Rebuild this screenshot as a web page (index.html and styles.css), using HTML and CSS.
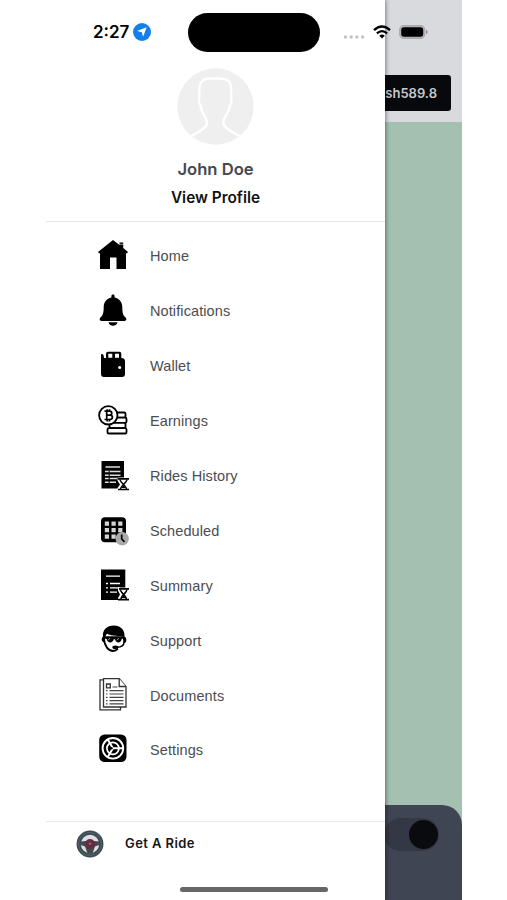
FILE: index.html
```html
<!DOCTYPE html>
<html lang="en">
<head>
<meta charset="utf-8">
<title>Menu</title>
<link rel="stylesheet" href="styles.css">
</head>
<body>
<div class="phone">
  <div class="backdrop">
    <header class="top"><div class="balance">Ksh589.8</div></header>
    <div class="map"><div class="sheet"><div class="switch"><span class="knob"></span></div></div></div>
  </div>
  <aside class="drawer">
    <section class="profile">
      <svg class="avatar" viewBox="0 0 77 77">
        <defs><clipPath id="round"><circle cx="38.5" cy="38.5" r="38.2"/></clipPath></defs>
        <circle cx="38.5" cy="38.5" r="38.2" fill="#efefef"/>
        <path clip-path="url(#round)" d="M13 69C20 64 28 62 30 56C31 49 24 47 23.500 37C21 35 22 31 22.500 26C21 8 31 11 38 10.500C46 11 56 8 54 26C54.500 31 55.500 35 53 37C52 47 45 49 46.500 56C48.500 62 57 64 64 69" fill="none" stroke="#fff" stroke-width="2.4"/>
      </svg>
      <div class="name">John Doe</div>
      <div class="view">View Profile</div>
    </section>
    <nav class="menu">
      <a class="item"><svg class="icon" viewBox="0 0 32 32"><path d="M1 12 16 0l6.500 5V2.600h3.700v5.400L31 12l-1 1.300h-1V29h-9.500V17.500h-6.500V29H3V13.300H2z"/><path d="M22 4.300h4.400" stroke="#fff" stroke-width=".6"/></svg><span>Home</span></a>
      <a class="item"><svg class="icon" viewBox="0 0 32 32"><path d="M16-.5c1 0 1.600.7 1.600 1.700v1.200c5 1 7.700 4.800 7.700 9.600 0 6 .8 8.200 3 10.300 1.800 1.600 1 3.700-.8 3.700h-23c-1.800 0-2.600-2.100-.8-3.700 2.200-2.100 3-4.300 3-10.300 0-4.800 2.700-8.600 7.700-9.600V1.200C14.400.2 15-.5 16-.5zM11.500 27.300h9c-.3 2.100-2.300 3.500-4.500 3.500s-4.200-1.400-4.500-3.500z"/></svg><span>Notifications</span></a>
      <a class="item"><svg class="icon" viewBox="0 0 32 32"><path d="M4 4.500Q5.500 3.500 6.500 5L7 8h2V3.700Q9 1.700 11 1.700h11.300q2 0 2 2V8Q28 8 28 11v13q0 3-3 3H7q-3 0-3-3z"/><path d="M11.300 3.800h4v4h-4zM18 3.800h4v4h-4z" fill="#fff"/><circle cx="22.700" cy="17.500" r="1.500" fill="#fff"/></svg><span>Wallet</span></a>
      <a class="item"><svg class="icon" viewBox="0 0 32 32"><g fill="#fff" stroke="#000" stroke-width="1.800"><rect x="14.500" y="7.500" width="14" height="5.200" rx="1.300"/><rect x="15.500" y="12.700" width="14" height="5.200" rx="1.300"/><rect x="12.500" y="17.900" width="16" height="5.200" rx="1.300"/><rect x="10.500" y="23.100" width="19" height="5.400" rx="1.300"/><circle cx="11.300" cy="10.300" r="9.200"/></g><path d="M7.500 6.200h5c3 0 3 4 0 4H9.500h3.300c3.500 0 3.500 4.300 0 4.300H7.500M9.700 6v8.500M10.200 4.300v2m2.300-2v2M10.200 14.500v2m2.300-2v2" fill="none" stroke="#000" stroke-width="1.700"/></svg><span>Earnings</span></a>
      <a class="item"><svg class="icon" viewBox="0 0 32 32"><path d="M4.500 1H27v27.500H4.500z"/><path d="M8.500 7h14.500M8 11.500h15.500M8 15.200h15.500M8 18.600h12M8 22.200h11" stroke="#ddd" stroke-width="1.500"/><path d="M12.200 11v12" stroke="#000"/><path d="m20.500 17.500h11.500v3l-2.500 4 2.500 3.500v3H20.500v-3l2.500-3.500-2.500-4z" fill="#fff"/><path d="M21 18.800h11M21 29.500h11" stroke="#000" stroke-width="1.700"/><path d="M23 19.500c0 3 6.500 6 6.500 9.500M30 19.500c0 3-6.500 6-6.500 9.500" fill="none" stroke="#000" stroke-width="1.400"/><path d="m26.500 25 2 3h-4z"/></svg><span>Rides History</span></a>
      <a class="item"><svg class="icon" viewBox="0 0 32 32"><rect x="4" y="2.300" width="25" height="25" rx="4"/><path d="M7.800 6.500h4.200v4.200H7.800zm6.700 0h4.200v4.200h-4.200zm6.700 0h4.200v4.200h-4.200zM7.800 13h4.200v4.200H7.800zm6.700 0h4.200v4.200h-4.200zm6.700 0h4.200v4.200h-4.200zM7.800 19.500h4.200v4.200H7.800zm6.700 0h4.200v4.200h-4.200z" fill="#d5d5d5"/><circle cx="25.200" cy="23.700" r="6.700" fill="#aaa"/><path d="M24.700 19.500v4.500l2.800 2.800" fill="none" stroke="#000" stroke-width="1.700"/></svg><span>Scheduled</span></a>
      <a class="item"><svg class="icon" viewBox="0 0 32 32"><path d="M4-.5h24.300V30H4z"/><path d="M9 6.200h14M9 13.500h2m2 0h10M9 17.800h2m2 0h10M9 22.200h2m2 0h7" stroke="#fff" stroke-width="1.300"/><path d="M21 17.500h11v3l-2.500 4 2.500 3.500v3H21v-3l2-3.500-2-4z" fill="#fff"/><path d="M22 18.800h10M21 29.700h11" stroke="#000" stroke-width="1.700"/><path d="M23.300 19.500c0 3 6 6 6 9.500M30 19.500c0 3-6 6-6 9.500" fill="none" stroke="#000" stroke-width="1.500"/><path d="m26.600 25 2 3h-4z"/></svg><span>Summary</span></a>
      <a class="item"><svg class="icon" viewBox="0 0 32 32"><path d="M6 11.500C5.300 4.500 10 .4 16.700.4S28 4.500 27.500 11.500q1.800 1 1.800 3v1.500q0 2-2.800 2.300L25.500 11C20 11 12 10.500 10 8.500L8 12v5.500q-3.300-.5-3.300-3Q4.700 12.500 6 11.500z"/><path d="M7 14c.4 7 4.500 12 9 12 2 0 3.500-.7 5-2.300" fill="none" stroke="#000" stroke-width="1.900"/><path d="M7.500 11.300h18.500v2.200l-1.300.5c-.3 4.500-6.200 4.500-6.700.3h-1.300c-.5 4.200-6.500 4.200-7-.3l-2.200-.5z"/><path d="m11.200 15.200 1.700-2M20 15.200l1.700-2" stroke="#ccc" stroke-width=".8"/><path d="M27 17c0 3.500-3 5.200-7 5.200" fill="none" stroke="#000" stroke-width="1.500"/><ellipse cx="18.300" cy="22.300" rx="3" ry="1.900"/></svg><span>Support</span></a>
      <a class="item"><svg class="icon" viewBox="0 0 32 32"><g fill="#fff" stroke="#333" stroke-width="1.300"><path d="M6.500-.2H3v30h20.500V27"/><path d="M6.500-1.300h15.700L29 6.500v20.500H6.500z"/><path d="M22.200-1.300v7.800H29M9.500 4h3.800v3.800H9.500z"/></g><path d="M15.500 7h5M9 10.700h1.500m2 0h14M9 14h1.500m2 0h14M9 17.300h1.500m2 0h14M9 20.600h1.500m2 0h14M9 23.900h1.500m2 0h14" stroke="#444" stroke-width="1.200"/></svg><span>Documents</span></a>
      <a class="item"><svg class="icon" viewBox="0 0 32 32"><rect x="2.200" y=".5" width="27.300" height="27.500" rx="5.500"/><g fill="none" stroke="#fff"><circle cx="15.900" cy="14.300" r="10.300" stroke-width="1.900"/><circle cx="15.900" cy="14.300" r="6" stroke-width="1.700"/><path d="M16 14.300h10M15.900 14.300 10.800 5.500M15.900 14.300l-5.100 8.800" stroke-width="2"/></g><circle cx="14.500" cy="14.300" r="1.200"/></svg><span>Settings</span></a>
    </nav>
    <footer class="ride">
      <svg class="wheel" viewBox="0 0 28 28"><circle cx="14" cy="14" r="11.300" fill="#dedfe0" stroke="#3c4b52" stroke-width="4.300"/><circle cx="14" cy="14" r="11.500" fill="none" stroke="#66757b" stroke-width=".6"/><path d="M5 11.500 10 11h8l5 .5v3.500l-4 1.500-2.500 7h-5L9 16.500 5 15z" fill="#46474f"/><circle cx="14" cy="14" r="5" fill="#622e43"/><circle cx="14" cy="13.700" r="1.300" fill="#956177"/></svg>
      <span>Get A Ride</span>
    </footer>
  </aside>
  <div class="status">
    <span class="time">2:27</span>
    <svg class="locate" viewBox="0 0 18 18"><circle cx="9" cy="9" r="9" fill="#137eed"/><path d="m13.700 4.300-3.600 9.500-1.300-4.600-4.700-1.300z" fill="#fff"/></svg>
    <span class="island"></span>
    <svg class="signal" viewBox="0 0 22 6" fill="#c3c3c6"><circle cx="2.500" cy="3" r="1.700"/><circle cx="8.200" cy="3" r="1.700"/><circle cx="13.900" cy="3" r="1.700"/><circle cx="19.600" cy="3" r="1.700"/></svg>
    <svg class="wifi" viewBox="0 0 18 14"><path d="M1 5.200Q9-2.200 17 5.200M3.900 8.400q5.100-4.600 10.200 0" fill="none" stroke="#000" stroke-width="2.300"/><path d="M6.200 10.700q2.800-2.300 5.600 0L9 13.500z"/></svg>
    <svg class="battery" viewBox="0 0 29 14"><rect x=".7" y=".7" width="25" height="12.600" rx="4" fill="#b5b5b8" stroke="#aaaaad" stroke-width="1.200"/><rect x="2.200" y="2.200" width="22" height="9.600" rx="2.700"/><path d="M27 4.700q1.600.8 1.600 2.300T27 9.300z" fill="#88888c"/></svg>
  </div>
  <span class="home-bar"></span>
</div>
</body>
</html>
```

FILE: styles.css
```css
* { box-sizing: border-box; }
body { margin: 0; background: #fff; font-family: Inter, "Liberation Sans", sans-serif; }
svg { display: block; flex: none; overflow: visible; }
.phone { position: relative; width: 416px; height: 900px; margin-left: 46px; overflow: hidden; }

.backdrop { display: flex; flex-direction: column; height: 900px; }
.top { height: 122px; padding: 75px 11px 0 0; background: #d9dade; display: flex; justify-content: flex-end; align-items: flex-start; }
.balance { height: 36px; padding: 0 14px; border-radius: 3px; background: #07090d; color: #c8c9cc; font-size: 13px; font-weight: 600; line-height: 36px; letter-spacing: 0; }
.map { flex: 1; display: flex; align-items: flex-end; background: #a3c0b1; }
.sheet { width: 100%; height: 95px; padding: 13px 23px; border-radius: 0 20px 0 0; background: #404554; display: flex; justify-content: flex-end; align-items: flex-start; }
.switch { width: 55px; height: 33px; padding-right: 1px; border-radius: 17px; background: #343744; display: flex; justify-content: flex-end; align-items: center; }
.knob { width: 29px; height: 29px; border-radius: 50%; background: #090b0f; }

.drawer { position: absolute; inset: 0 auto 0 0; width: 339px; background: #fff; box-shadow: 1px 0 4px rgba(0, 0, 0, .42); display: flex; flex-direction: column; }
.profile { height: 222px; padding-top: 68px; border-bottom: 1px solid #e7e7e7; display: flex; flex-direction: column; align-items: center; }
.avatar { width: 77px; height: 77px; }
.name { margin-top: 12px; font-size: 16.600px; line-height: 24px; font-weight: 600; color: #46484d; }
.view { margin-top: 5px; font-size: 15.400px; line-height: 24px; font-weight: 600; color: #111; }
.menu { height: 599px; padding-top: 7px; }
.item { height: 54.900px; padding-left: 51px; display: flex; align-items: center; gap: 21px; color: #4b4d52; font: 14.500px/20px "Liberation Sans", sans-serif; letter-spacing: .1px; }
.icon { width: 32px; height: 32px; }
.ride { flex: 1; padding: 8px 0 0 30px; border-top: 1px solid #e9eaec; display: flex; align-items: flex-start; gap: 21px; font-size: 13px; font-weight: 600; line-height: 27px; letter-spacing: .42px; color: #161616; }
.wheel { width: 28px; height: 28px; }

.status { position: absolute; inset: 12px 0 auto 0; height: 40px; padding-left: 47px; display: flex; align-items: center; }
.time { width: 40px; font-size: 17px; font-weight: 600; line-height: 20px; letter-spacing: 0; white-space: nowrap; }
.locate { width: 18px; height: 18px; }
.island { width: 132px; height: 39px; margin-left: 37px; border-radius: 20px; background: #000; }
.signal { width: 22px; height: 6px; margin: 9px 0 0 23px; }
.wifi { width: 18px; height: 14px; margin-left: 8px; }
.battery { width: 29px; height: 14px; margin-left: 8px; }
.home-bar { position: absolute; left: 134px; bottom: 8px; width: 148px; height: 5px; border-radius: 3px; background: #676767; }
```
